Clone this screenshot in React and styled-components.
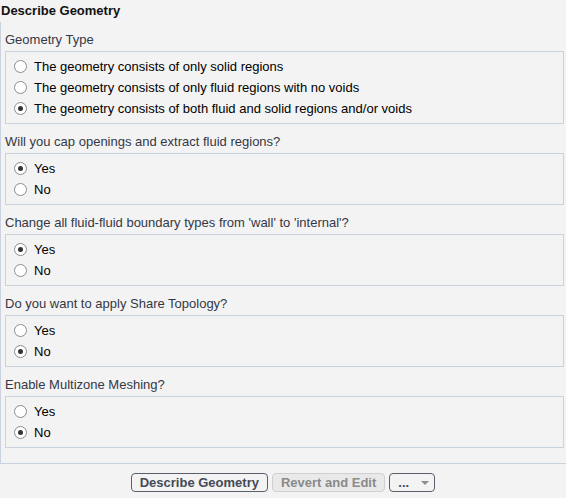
import React from 'react'
import styled, { createGlobalStyle } from 'styled-components'

const sections = [
  {
    label: 'Geometry Type',
    options: [
      'The geometry consists of only solid regions',
      'The geometry consists of only fluid regions with no voids',
      'The geometry consists of both fluid and solid regions and/or voids',
    ],
    selected: 2,
  },
  { label: 'Will you cap openings and extract fluid regions?', options: ['Yes', 'No'], selected: 0 },
  { label: "Change all fluid-fluid boundary types from 'wall' to 'internal'?", options: ['Yes', 'No'], selected: 0 },
  { label: 'Do you want to apply Share Topology?', options: ['Yes', 'No'], selected: 1 },
  { label: 'Enable Multizone Meshing?', options: ['Yes', 'No'], selected: 1 },
]

function App() {
  return (
    <>
      <GlobalStyle />
      <Page>
        <Title>Describe Geometry</Title>
        <Panel>
          {sections.map((s, i) => (
            <Section key={i}>
              <Label>{s.label}</Label>
              <Box>
                {s.options.map((o, j) => (
                  <Row key={j}>
                    <Radio checked={j === s.selected} />
                    <OptionText>{o}</OptionText>
                  </Row>
                ))}
              </Box>
            </Section>
          ))}
        </Panel>
        <Footer>
          <Button>Describe Geometry</Button>
          <Button disabled>Revert and Edit</Button>
          <Menu>
            <span>...</span>
            <Caret />
          </Menu>
        </Footer>
      </Page>
    </>
  )
}

export default App

const GlobalStyle = createGlobalStyle`
  html, body {
    margin: 0;
    padding: 0;
    background: #f3f3f3;
  }
  body {
    font-family: "Liberation Sans", Arial, sans-serif;
    font-size: 13px;
  }
`

const Page = styled.div`
  width: 566px;
  height: 498px;
  overflow: hidden;
  background: #f3f3f3;
`

const Title = styled.div`
  height: 22px;
  line-height: 22px;
  padding-left: 1px;
  font-weight: bold;
  color: #111;
`

const Panel = styled.div`
  border-left: 1px solid #cbd2df;
  border-bottom: 1px solid #cbd2df;
  padding: 0 2px 15px 4px;
`

const Section = styled.div`
  display: flex;
  flex-direction: column;
`

const Label = styled.div`
  padding-top: 10px;
  height: 16px;
  line-height: 16px;
  margin-bottom: 3px;
  color: #333846;
`

const Box = styled.div`
  border: 1px solid #cbd2df;
  padding: 4px 8px;
`

const Row = styled.div`
  display: flex;
  align-items: center;
  height: 21px;
  gap: 7px;
`

const Radio = styled.span`
  width: 11px;
  height: 11px;
  border-radius: 50%;
  border: 1px solid #8c8c8c;
  background: #fff;
  display: flex;
  align-items: center;
  justify-content: center;
  flex-shrink: 0;

  &::after {
    content: '';
    width: 5px;
    height: 5px;
    border-radius: 50%;
    background: ${(p) => (p.checked ? '#333' : 'transparent')};
  }
`

const OptionText = styled.span`
  color: #000;
`

const Footer = styled.div`
  display: flex;
  justify-content: center;
  gap: 4px;
  padding-top: 9px;
`

const Button = styled.button`
  height: 19px;
  padding: 0 8px;
  font-family: "Liberation Sans", Arial, sans-serif;
  font-size: 13px;
  font-weight: bold;
  border-radius: 4px;
  border: 1px solid ${(p) => (p.disabled ? '#cfcfcf' : '#5a5f6a')};
  background: ${(p) => (p.disabled ? '#e9e9e9' : '#f3f3f3')};
  color: ${(p) => (p.disabled ? '#8a8a8a' : '#454a56')};
`

const Menu = styled.div`
  box-sizing: border-box;
  width: 46px;
  height: 19px;
  border: 1px solid #5a5f6a;
  border-radius: 4px;
  display: flex;
  align-items: center;
  justify-content: space-between;
  padding: 0 5px 0 8px;
  font-weight: bold;
  color: #454a56;
`

const Caret = styled.span`
  width: 0;
  height: 0;
  border-left: 4px solid transparent;
  border-right: 4px solid transparent;
  border-top: 4px solid #8a8d94;
`
